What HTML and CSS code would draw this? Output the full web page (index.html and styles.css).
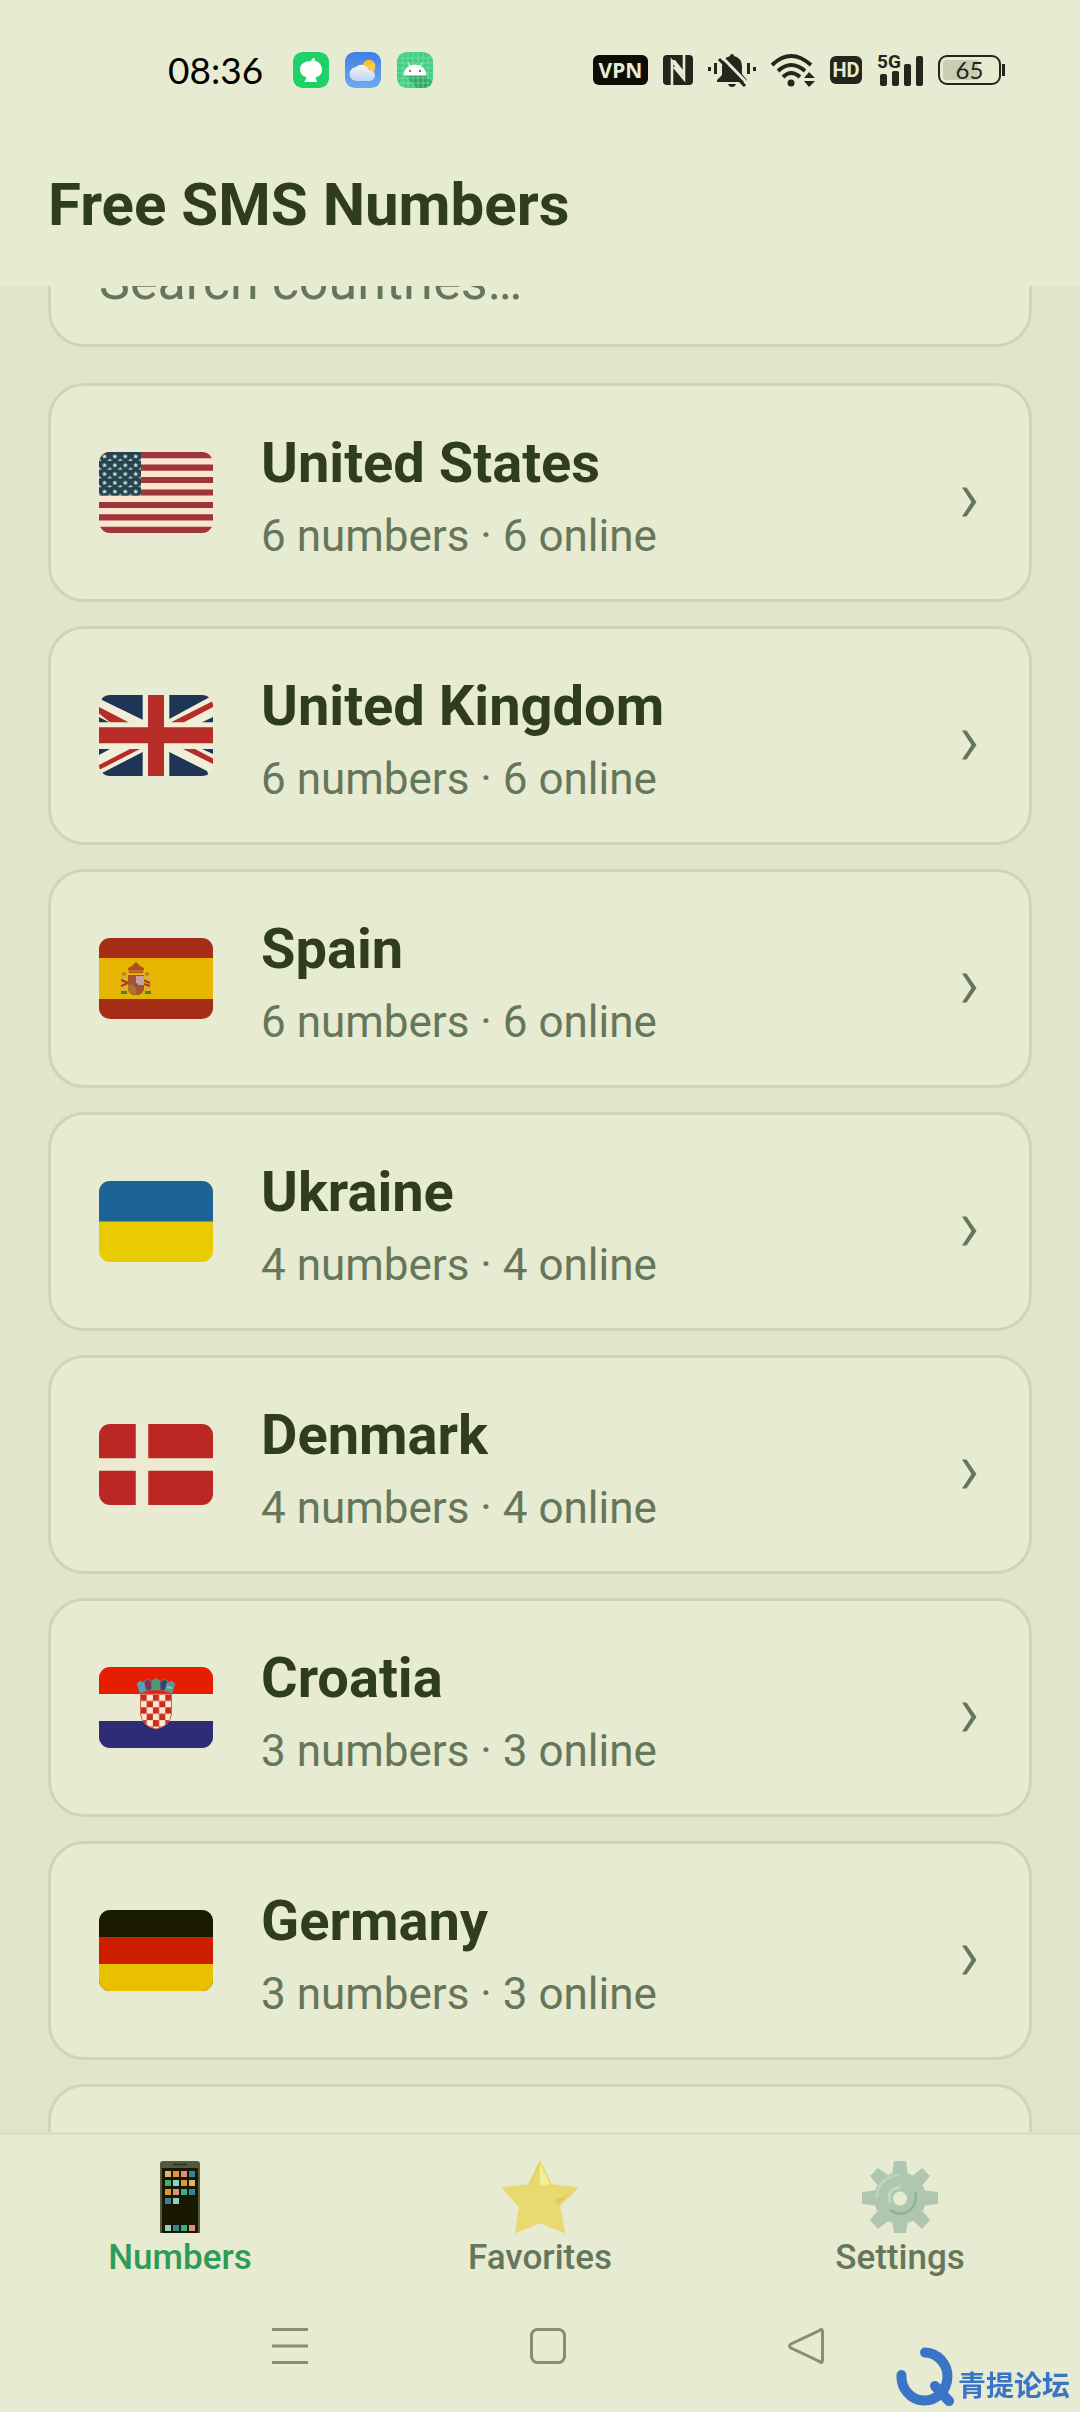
FILE: index.html
```html
<!DOCTYPE html>
<html lang="en">
<head>
<meta charset="utf-8">
<meta name="viewport" content="width=device-width, initial-scale=1">
<title>Free SMS Numbers</title>
<link rel="stylesheet" href="styles.css">
</head>
<body>
<div class="status">
  <div class="status-left">
    <time class="clock">08:36</time>
    <svg class="app" viewBox="0 0 36 36" aria-hidden="true"><rect width="36" height="36" rx="9" fill="#20d068"/><path d="M18 9C19 6 21 6 22 6Q21 7 22 9C27 10 29 14 29 18C29 22 26 25 23 25Q22 27 24 30H11Q14 27 13 25C9 24 7 21 7 17C7 12 12 9 18 9Z" fill="#fff"/></svg>
    <svg class="app" viewBox="0 0 36 36" aria-hidden="true">
      <defs><linearGradient id="sky" x2="0" y2="1"><stop stop-color="#3f7fe6"/><stop offset="1" stop-color="#6faaf0"/></linearGradient><linearGradient id="cloud" x2="0" y2="1"><stop stop-color="#f6f4ea"/><stop offset="1" stop-color="#bdd6f6"/></linearGradient></defs>
      <rect width="36" height="36" rx="9" fill="url(#sky)"/><circle cx="24" cy="14" r="6.300" fill="#fbc02b"/><path d="M12 29a7 7 0 0 1-1-14a8 8 0 0 1 13 3a5.500 5.500 0 0 1 1 11z" fill="url(#cloud)"/><path d="M20 13q5 1 5 6l4 1q2-4 0-8z" fill="#f8cf60" opacity=".8"/></svg>
    <svg class="app" viewBox="0 0 36 36" aria-hidden="true"><rect width="36" height="36" rx="9" fill="#42cf81"/><path d="M8 23L28 23L36 31V36H20Z" fill="#2fa866"/><path d="M6 0V36M11 0V36M16 0V36M21 0V36M26 0V36M31 0V36M0 6H36M0 11H36M0 16H36M0 21H36M0 26H36M0 31H36" stroke="#8fe3b3" stroke-width=".6"/><path d="M7 23a11 10 0 0 1 22 0zM11 11l3 5M25 11l-3 5" fill="#fff" stroke="#fff" stroke-width="1"/><circle cx="13" cy="19" r="1" fill="#444"/><circle cx="23" cy="19" r="1" fill="#444"/></svg>
  </div>
  <div class="status-right">
    <span class="badge vpn">VPN</span>
    <svg width="30" height="30" viewBox="0 0 30 30" aria-label="NFC"><rect width="30" height="30" rx="4" fill="#24251c"/><path d="M9 30V6L20 19M21 0V24L11 12" fill="none" stroke="#e7ebd1" stroke-width="2.600"/><path d="M8 5L12 5L20 15V20L11 9Z" fill="#e7ebd1"/></svg>
    <svg width="48" height="34" viewBox="0 0 48 34" aria-label="Muted"><g fill="#24251c"><path d="M24 1q2 0 2 2q8 2 8 11v7l5 6v2H9v-2l5-5v-8q0-9 8-11q0-2 2-2z"/><path d="M20 31h8q-1 3-4 3t-4-3z"/><rect y="14" width="3" height="4"/><rect x="6" y="10" width="3" height="11"/><rect x="39" y="10" width="3" height="11"/><rect x="45" y="14" width="3" height="4"/></g><path d="M14 4L40 31" stroke="#e7ebd1" stroke-width="3"/><path d="M11 6L37 33" stroke="#24251c" stroke-width="3"/></svg>
    <svg width="44" height="34" viewBox="0 0 44 34" aria-label="Wi-Fi"><g fill="none" stroke="#24251c" stroke-width="4"><path d="M1 12Q20-6 40 12"/><path d="M7 18Q20 6 34 18"/><path d="M12 24Q20 16 29 24"/></g><circle cx="20" cy="30" r="3.500" fill="#24251c"/><path d="M33 25l5-6 6 6zM33 28h11l-6 6z" fill="#24251c"/></svg>
    <span class="badge hd">HD</span>
    <span class="signal"><span class="gen">5G</span><svg width="46" height="32" viewBox="0 0 46 32" aria-hidden="true"><g fill="#24251c"><rect x="3" y="20" width="7" height="12" rx="2"/><rect x="15" y="17" width="7" height="15" rx="2"/><rect x="27" y="10" width="7" height="22" rx="2"/><rect x="39" y="2" width="7" height="30" rx="2"/></g></svg></span>
    <span class="battery"><span class="cell">65</span></span>
  </div>
</div>

<header class="header"><h1>Free SMS Numbers</h1></header>

<main class="content">
  <input class="search" type="search" placeholder="Search countries…" aria-label="Search countries">
  <ul class="list">
    <li><a class="card" href="#us">
      <svg class="flag" viewBox="0 0 114 81" aria-hidden="true"><defs><pattern id="stars" width="10.400" height="8.800" patternUnits="userSpaceOnUse"><path id="st" d="M5.500 1.900l.7 1.600 1.800.1-1.300 1.200 .4 1.700-1.600-.9-1.600.9.4-1.700-1.300-1.200 1.800-.1z" fill="#d5e6e2"/><use href="#st" x="-5.200" y="4.200"/><use href="#st" x="5.200" y="4.200"/></pattern></defs><rect width="114" height="81" fill="#f9e5d0"/><path d="M0 3.100H114M0 15.600H114M0 28H114M0 40.500H114M0 53H114M0 65.400H114M0 77.900H114" stroke="#a03539" stroke-width="6.200"/><path d="M0 0H42V43.500H0Z" fill="#24434e"/><path d="M0 0H42V43.500H0Z" fill="url(#stars)"/></svg>
      <span class="info"><span class="name">United States</span><span class="meta">6 numbers · 6 online</span></span>
      <svg class="chevron" viewBox="0 0 24 48" aria-hidden="true"><path d="M5 18.500H9.500L19.500 33L9.500 47.500H5L14.500 33Z"/></svg>
    </a></li>
    <li><a class="card" href="#gb">
      <svg class="flag" viewBox="0 0 114 81" aria-hidden="true"><rect width="114" height="81" fill="#f0eed6"/><path d="M0 0H43.700V24.700L3 5ZM0 22L10 27.300H0ZM70.300 0H114L109 3L70.300 24ZM114 22V27.300H103ZM0 54H11L0 60ZM43.700 57V81H0L3 78ZM70.300 57L108 76L110 81H70.300ZM103 54H114V59Z" fill="#1d3656"/><path d="M49 0H65V32.300H114V48.300H65V81H49V48.300H0V32.300H49ZM0 12L29.500 27.300H11L0 18.500ZM72 27.300L114 6V12L85 27.300ZM0 70L31 54H41L0 75ZM84 54H96L114 63.500V69Z" fill="#b72b29"/></svg>
      <span class="info"><span class="name">United Kingdom</span><span class="meta">6 numbers · 6 online</span></span>
      <svg class="chevron" viewBox="0 0 24 48" aria-hidden="true"><path d="M5 18.500H9.500L19.500 33L9.500 47.500H5L14.500 33Z"/></svg>
    </a></li>
    <li><a class="card" href="#es">
      <svg class="flag" viewBox="0 0 114 81" aria-hidden="true"><rect width="114" height="81" fill="#a62e16"/><rect y="20" width="114" height="41" fill="#e5b500"/><g><path d="M25 38v17M49 38v17" stroke="#c9ae5d" stroke-width="3"/><path d="M22 42l8 3M22 48l7-3M42 45l9 3M44 42l7 3" stroke="#b23a1e" stroke-width="2"/><circle cx="25" cy="36" r="2" fill="#a38a26"/><circle cx="48" cy="36" r="2" fill="#a38a26"/><path d="M22 53h6v3h-6zM46 53h6v3h-6z" fill="#59793a"/><path d="M29 37H45V51Q44 57 37 57T29 51Z" fill="#a4552a"/><path d="M37 38h8v9h-8z" fill="#c8a0a0"/><path d="M29 47h8v9q-7 0-8-5z" fill="#b2722c"/><circle cx="37" cy="47" r="2" fill="#765078"/><path d="M30 35l-1-5 4-2 4-4 4 4 4 2-1 5z" fill="#ab4e20"/><path d="M30 33h14" stroke="#d19b20" stroke-width="1"/></g></svg>
      <span class="info"><span class="name">Spain</span><span class="meta">6 numbers · 6 online</span></span>
      <svg class="chevron" viewBox="0 0 24 48" aria-hidden="true"><path d="M5 18.500H9.500L19.500 33L9.500 47.500H5L14.500 33Z"/></svg>
    </a></li>
    <li><a class="card" href="#ua">
      <svg class="flag" viewBox="0 0 114 81" aria-hidden="true"><rect width="114" height="81" fill="#e8cb00"/><rect width="114" height="40.500" fill="#1c6497"/></svg>
      <span class="info"><span class="name">Ukraine</span><span class="meta">4 numbers · 4 online</span></span>
      <svg class="chevron" viewBox="0 0 24 48" aria-hidden="true"><path d="M5 18.500H9.500L19.500 33L9.500 47.500H5L14.500 33Z"/></svg>
    </a></li>
    <li><a class="card" href="#dk">
      <svg class="flag" viewBox="0 0 114 81" aria-hidden="true"><rect width="114" height="81" fill="#bb2725"/><path d="M43 0V81M0 40.500H114" stroke="#eeead2" stroke-width="12.500"/></svg>
      <span class="info"><span class="name">Denmark</span><span class="meta">4 numbers · 4 online</span></span>
      <svg class="chevron" viewBox="0 0 24 48" aria-hidden="true"><path d="M5 18.500H9.500L19.500 33L9.500 47.500H5L14.500 33Z"/></svg>
    </a></li>
    <li><a class="card" href="#hr">
      <svg class="flag" viewBox="0 0 114 81" aria-hidden="true"><defs><pattern id="check" x="41.500" y="27.500" width="12.400" height="12.800" patternUnits="userSpaceOnUse"><rect width="12.400" height="12.800" fill="#f8e9d6"/><path d="M0 0h6.200v6.400H0zM6.200 6.400h6.200v6.400H6.200z" fill="#cb2e18"/></pattern></defs><rect width="114" height="81" fill="#e9ead2"/><rect width="114" height="27" fill="#e61d00"/><rect y="54" width="114" height="27" fill="#2d2c74"/><path d="M41.500 27H72.500V47Q71 59 57 62Q43 59 41.500 47Z" fill="url(#check)" stroke="#d8604c" stroke-width="1"/><g stroke="#7d8490" stroke-width=".8"><path d="M41 26L38 17 41 14 46 16 48 24Z" fill="#4aa5b5"/><path d="M47 24L45 14 49 12 53 15 53 23Z" fill="#7b3453"/><path d="M53 23V14L57 11 61 14V23Z" fill="#4b9b70"/><path d="M61 23V15L65 12 69 14 67 24Z" fill="#35436f"/><path d="M66 24L68 16 73 14 76 17 73 26Z" fill="#4a9cad"/></g><path d="M68 20l5 1" stroke="#e0b255" stroke-width="2"/></svg>
      <span class="info"><span class="name">Croatia</span><span class="meta">3 numbers · 3 online</span></span>
      <svg class="chevron" viewBox="0 0 24 48" aria-hidden="true"><path d="M5 18.500H9.500L19.500 33L9.500 47.500H5L14.500 33Z"/></svg>
    </a></li>
    <li><a class="card" href="#de">
      <svg class="flag" viewBox="0 0 114 81" aria-hidden="true"><rect width="114" height="81" fill="#1a1a02"/><rect y="27" width="114" height="27" fill="#cf1d00"/><rect y="54" width="114" height="27" fill="#e9c000"/></svg>
      <span class="info"><span class="name">Germany</span><span class="meta">3 numbers · 3 online</span></span>
      <svg class="chevron" viewBox="0 0 24 48" aria-hidden="true"><path d="M5 18.500H9.500L19.500 33L9.500 47.500H5L14.500 33Z"/></svg>
    </a></li>
    <li><a class="card" href="#more" aria-label="More countries"></a></li>
  </ul>
</main>

<nav class="tabs">
  <a class="tab active" href="#numbers">
    <svg class="tab-icon" viewBox="0 0 76 74" aria-hidden="true"><path d="M18 73V4Q18 1 21 1H55Q58 1 58 4V73Z" fill="#55573f"/><path d="M20 73V8H56V73Z" fill="#181900"/><path d="M31 4.500H45" stroke="#333521" stroke-width="1.500"/>
    <g><path d="M23 11h6v6h-6zM47 20h6v6h-6z" fill="#e0b467"/><path d="M31 11h6v6h-6zM39 20h6v6h-6zM23 29h6v6h-6z" fill="#df963b"/><path d="M39 11h6v6h-6zM31 29h6v6h-6zM47 65h6v6h-6z" fill="#dc8d86"/><path d="M47 11h6v6h-6zM47 29h6v6h-6zM23 38h6v6h-6zM31 65h6v6h-6z" fill="#36839a"/><path d="M23 20h6v6h-6zM39 29h6v6h-6zM39 65h6v6h-6z" fill="#35b17d"/><path d="M31 20h6v6h-6zM31 38h6v6h-6zM23 65h6v6h-6z" fill="#93cfc0"/></g></svg>
    <span>Numbers</span></a>
  <a class="tab" href="#favorites">
    <svg class="tab-icon" viewBox="0 0 76 74" aria-hidden="true"><path d="M38 2L49 25L75 28L57 46L62 72L38 62L14 72L18 47L1 28L27 25Z" fill="#e9da70" stroke="#e9da70" stroke-width="2" stroke-linejoin="round"/><path d="M38 4L48 24Q42 27 38 24Z" fill="#f6ee92"/><path d="M37 5L28 25" stroke="#e4d06b" stroke-width="2"/><path d="M70 31L57 44Q52 42 54 39Q62 38 70 31Z" fill="#dfc965"/></svg>
    <span>Favorites</span></a>
  <a class="tab" href="#settings">
    <svg class="tab-icon" viewBox="0 0 76 74" aria-hidden="true"><g fill="#afc7b0"><path d="M32 1H44L46 16H30ZM30 60H46L44 73H32Z"/><path d="M0 32L16 30V46L0 44ZM76 32L60 30V46L76 44Z"/><path d="M8 16L16 8L30 18L18 28ZM60 8L68 16L58 28L48 18ZM8 60L16 69L30 58L18 48ZM60 69L68 60L58 48L48 58Z"/><circle cx="38" cy="38" r="26"/></g><path d="M15 38Q15 18 37 15" fill="none" stroke="#bbd5c2" stroke-width="3"/><path d="M53 32A16 16 0 0 1 28 50" fill="none" stroke="#8fb29c" stroke-width="2.500"/><path d="M28 43Q24 29 38 27" fill="none" stroke="#c2d8c4" stroke-width="3"/><circle cx="38" cy="38.500" r="7" fill="#e7ebd1"/></svg>
    <span>Settings</span></a>
</nav>

<div class="system">
  <button type="button" aria-label="Recent apps"><svg viewBox="0 0 36 36"><path d="M0 1.500H36M0 18H36M0 34.500H36"/></svg></button>
  <button type="button" aria-label="Home"><svg viewBox="0 0 36 36"><rect x="1.500" y="1.500" width="33" height="33" rx="6"/></svg></button>
  <button type="button" aria-label="Back"><svg viewBox="0 0 36 36"><path d="M31.500 2.500Q34.500 0 34.500 4V32Q34.500 36 31.500 33.500L3 20Q0 18 3 16Z"/></svg></button>
</div>

<div class="watermark">
  <svg viewBox="0 0 60 60" aria-hidden="true"><path d="M29 5.500A23 24 0 1 1 5.500 28M39 39L53 54"/></svg>
  <span lang="zh">青提论坛</span>
</div>
</body>
</html>
```
FILE: styles.css
```css
:root {
  --surface: #e7ebd1;
  --background: #dfe6ca;
  --line: #ced6ba;
  --ink: #303c20;
  --muted: #65765a;
  --glyph: #24251c;
}

* { box-sizing: border-box; }

body {
  margin: 0;
  height: 100vh;
  display: flex;
  flex-direction: column;
  overflow: hidden;
  background: var(--surface);
  color: var(--ink);
  font-family: Roboto, sans-serif;
}

svg { display: block; flex: none; }
a { color: inherit; text-decoration: none; }

.status {
  flex: none;
  height: 140px;
  padding: 0 75px 0 168px;
  display: flex;
  align-items: center;
  justify-content: space-between;
}
.status-left { display: flex; align-items: center; gap: 16px; }
.status-right { display: flex; align-items: center; gap: 15px; }
.clock { margin-right: 14px; font: 37px/40px Lato, sans-serif; color: #000; }
.app { width: 36px; height: 36px; border-radius: 9px; }
.badge {
  display: flex;
  align-items: center;
  justify-content: center;
  height: 30px;
  border-radius: 6px;
  background: var(--glyph);
  color: var(--surface);
  font: 700 21px/30px "Noto Sans", sans-serif;
}
.vpn { width: 55px; background: #0c0d05; }
.hd { width: 32px; height: 28px; font: 700 20px/28px Roboto, sans-serif; }
.signal { position: relative; }
.gen {
  position: absolute;
  left: 0;
  top: -1px;
  font: 700 19px/18px Roboto, sans-serif;
  color: var(--glyph);
}
.battery {
  display: flex;
  align-items: center;
  gap: 1px;
  color: var(--glyph);
}
.battery::after { content: ""; width: 3px; height: 12px; background: var(--glyph); }
.cell {
  width: 63px;
  height: 30px;
  border: 2px solid var(--glyph);
  border-radius: 9px;
  box-shadow: inset 0 0 0 3px var(--surface);
  background: linear-gradient(90deg, #c9ceb3 65%, transparent 65%);
  font: 24px/26px Lato, sans-serif;
  text-align: center;
}

.header { flex: none; padding: 29px 48px 45px; }
.header h1 { margin: 0; font-size: 60px; line-height: 72px; font-weight: 700; }

.content {
  flex: 1;
  min-height: 0;
  overflow: hidden;
  padding: 0 48px;
  background: var(--background);
}
.search {
  display: block;
  width: 100%;
  height: 132px;
  margin: -71px 0 36px;
  padding: 0 48px;
  border: 3px solid var(--line);
  border-radius: 36px;
  background: var(--surface);
  color: var(--ink);
  font: 52px/60px Roboto, sans-serif;
  appearance: none;
}
.search::placeholder { color: var(--muted); opacity: 1; }

.list { margin: 0; padding: 0; list-style: none; display: grid; gap: 24px; }
.card {
  display: flex;
  align-items: center;
  gap: 48px;
  min-height: 219px;
  padding: 36px 48px;
  border: 3px solid var(--line);
  border-radius: 36px;
  background: var(--surface);
}
.flag { width: 114px; height: 81px; border-radius: 11px; }
.info { flex: 1; display: flex; flex-direction: column; gap: 11px; }
.name { font-size: 56px; line-height: 76px; font-weight: 700; }
.meta { font-size: 44px; line-height: 48px; color: var(--muted); }
.chevron { width: 24px; height: 48px; fill: var(--muted); }

.tabs {
  flex: none;
  display: flex;
  padding: 25px 0 14px;
  border-top: 3px solid #dbe1c5;
}
.tab {
  flex: 1;
  display: flex;
  flex-direction: column;
  align-items: center;
  gap: 4px;
  font-size: 35px;
  line-height: 40px;
  font-weight: 500;
  color: var(--muted);
}
.tab.active { color: #2f9b57; }
.tab-icon { width: 76px; height: 74px; }

.system {
  flex: none;
  height: 120px;
  padding: 0 0 12px 16px;
  display: flex;
  align-items: center;
  justify-content: center;
  gap: 222px;
}
.system button { padding: 0; border: 0; background: none; }
.system svg { width: 36px; height: 36px; fill: none; stroke: #898d72; stroke-width: 3; }

.watermark {
  position: fixed;
  right: 10px;
  bottom: 5px;
  display: flex;
  align-items: center;
  gap: 2px;
  color: #3a74c6;
  font: 700 28px/40px "Noto Sans CJK SC", sans-serif;
}
.watermark svg { width: 60px; height: 60px; fill: none; stroke: #3a74c6; stroke-width: 10; stroke-linecap: round; }
.watermark span { padding-top: 14px; }
```
